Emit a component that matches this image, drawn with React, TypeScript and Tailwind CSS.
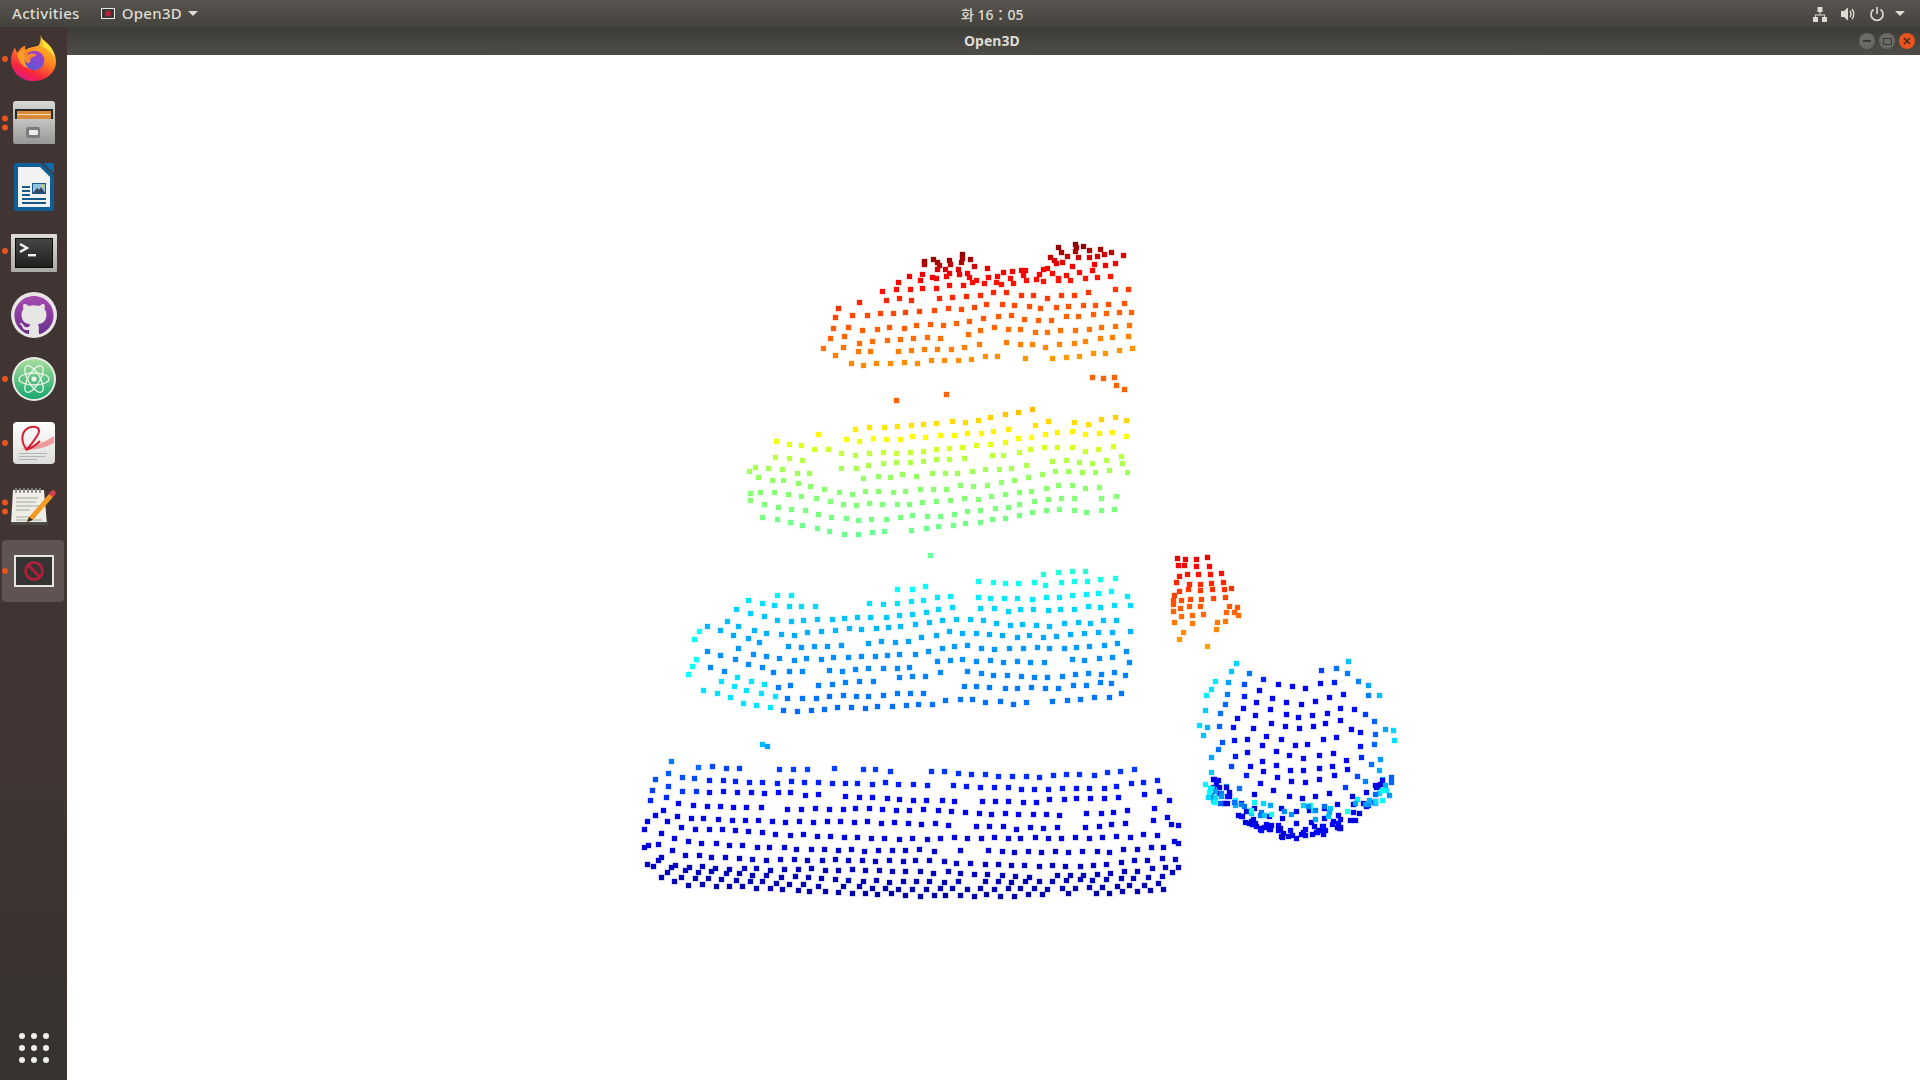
import type { ReactNode } from "react";

type Pt = [number, number];

interface Dot {
  x: number;
  y: number;
  v: number;
}

// seeded so the cloud comes out the same on every load
let seed = 73123;
const rnd = () => {
  seed = (seed + 0x6d2b79f5) | 0;
  let t = Math.imul(seed ^ (seed >>> 15), 1 | seed);
  t = (t + Math.imul(t ^ (t >>> 7), 61 | t)) ^ t;
  return ((t ^ (t >>> 14)) >>> 0) / 4294967296;
};

const lerp = (line: Pt[], a: number) => {
  if (a <= line[0][0]) return line[0][1];
  for (let i = 1; i < line.length; i++) {
    if (a <= line[i][0]) {
      const [x0, y0] = line[i - 1];
      const [x1, y1] = line[i];
      return y0 + ((y1 - y0) * (a - x0)) / (x1 - x0);
    }
  }
  return line[line.length - 1][1];
};

const jet = (v: number) => {
  const c = (n: number) => Math.round(255 * Math.max(0, Math.min(1, 1.5 - Math.abs(4 * v - n))));
  return `rgb(${c(3)},${c(2)},${c(1)})`;
};

// scan lines run along the bottom edge, each one starts at its own offset
function grid(o: {
  top: Pt[];
  bottom: Pt[];
  x0: number;
  x1: number;
  height: number;
  dx?: number;
  dy?: number;
  gaps?: number[];
  jit?: number;
  drop?: (x: number, y: number) => number;
  color: (x: number, y: number) => number;
}) {
  const out: Dot[] = [];
  const dx = o.dx ?? 13.5;
  const dy = o.dy ?? 13;
  const jit = o.jit ?? 2.5;
  let offset = 0;
  let row = 0;
  while (offset <= o.height) {
    const shift = rnd() * dx;
    const wobble = rnd() * 6;
    for (let x = o.x0 + shift; x <= o.x1; x += dx) {
      const y = lerp(o.bottom, x) - offset + Math.sin(x / 55 + wobble) * 1.5;
      const top = lerp(o.top, x);
      if (y < top - 1) continue;
      const px = x + (rnd() - 0.5) * jit;
      const py = y + (rnd() - 0.5) * jit;
      const drop = o.drop ? o.drop(px, py) : y < top + 10 ? 0.16 : 0.05;
      if (rnd() > drop) out.push({ x: px, y: py, v: o.color(px, py) });
    }
    offset += o.gaps && row < o.gaps.length ? o.gaps[row] : dy;
    row++;
  }
  return out;
}

const fromZoom = (pts: Pt[], ox: number, oy: number, v: (x: number, y: number) => number): Dot[] =>
  pts.map(([zx, zy]) => {
    const x = ox + zx / 3;
    const y = oy + zy / 3;
    return { x, y, v: v(x, y) };
  });

const topColor = (x: number, y: number) =>
  lerp(
    [
      [252, 1],
      [262, 0.95],
      [272, 0.89],
      [290, 0.85],
      [310, 0.8],
      [370, 0.72],
    ],
    y + 0.08 * (x - 960),
  );

const crown: Pt[] = [
  [372, 92], [372, 103], [398, 88], [411, 95], [418, 105], [446, 90], [449, 102], [486, 73], [486, 85], [484, 97],
  [510, 86], [523, 108], [561, 115], [410, 118], [435, 116], [473, 117], [773, 51], [782, 65], [825, 43], [829, 52],
  [848, 47], [826, 64], [868, 61], [901, 56], [911, 71], [933, 66], [968, 76], [892, 77], [867, 82], [833, 82],
  [801, 78], [751, 82], [762, 91], [767, 98], [785, 96], [816, 109], [742, 115], [730, 118], [295, 157], [327, 137],
  [360, 150], [366, 132], [397, 140], [409, 143], [437, 139], [448, 130], [478, 133], [500, 128], [508, 142], [517, 156],
  [552, 160], [565, 141], [587, 157], [592, 138], [604, 161], [610, 125], [636, 122], [662, 119], [676, 121], [630, 144],
  [640, 160], [670, 136], [678, 150], [707, 146], [718, 131], [757, 130], [775, 145], [797, 135], [837, 125], [877, 120],
  [882, 103], [915, 106], [946, 100],
];

const handScan: Pt[] = [
  [52, 55], [75, 56], [109, 56], [141, 52], [53, 76], [73, 76], [108, 79], [146, 77], [56, 108], [80, 103], [114, 101],
  [149, 102], [182, 99], [47, 126], [88, 131], [119, 131], [154, 128], [189, 125], [58, 153], [83, 148], [120, 151],
  [157, 146], [191, 146], [212, 143], [43, 166], [62, 179], [90, 178], [124, 178], [160, 175], [195, 172], [39, 180],
  [38, 193], [59, 203], [87, 197], [119, 199], [206, 197], [230, 200], [40, 212], [64, 229], [96, 225], [130, 221],
  [199, 217], [223, 215], [234, 226], [41, 247], [95, 248], [170, 247], [195, 244], [168, 268], [70, 277], [57, 296],
  [141, 317],
];

const cloud: Dot[] = [
  // cabinet top
  ...fromZoom(crown, 800, 230, topColor),
  ...grid({
    top: [[820, 320], [830, 304], [870, 294], [900, 286], [960, 282], [1040, 282], [1060, 272], [1130, 272]],
    bottom: [[820, 347], [853, 366], [890, 364], [915, 362], [963, 359], [993, 353], [1045, 358], [1098, 353], [1135, 350]],
    x0: 820,
    x1: 1135,
    height: 90,
    dy: 12.5,
    color: topColor,
  }),
  ...fromZoom(
    [[877, 441], [908, 444], [943, 442], [947, 466], [973, 476], [438, 492], [289, 510]],
    800,
    230,
    () => 0.78,
  ),
  // shelf two
  ...grid({
    top: [[747, 473], [758, 447], [775, 437], [808, 433], [860, 428], [907, 418], [947, 412], [1010, 410], [1063, 411], [1125, 420]],
    bottom: [[747, 493], [753, 517], [807, 525], [848, 533], [887, 530], [940, 526], [992, 521], [1063, 510], [1088, 514], [1117, 510], [1127, 497]],
    x0: 745,
    x1: 1127,
    height: 120,
    drop: (x, y) => (x > 815 && x < 862 && y > 458 && y < 483 ? 0.9 : 0.05),
    color: (_x, y) =>
      lerp(
        [
          [410, 0.69],
          [435, 0.63],
          [455, 0.56],
          [480, 0.52],
          [535, 0.48],
        ],
        y,
      ),
  }),
  { x: 930, y: 555, v: 0.48 },
  // shelf three
  ...grid({
    top: [[680, 660], [703, 622], [733, 613], [743, 597], [765, 592], [807, 597], [827, 617], [857, 612], [873, 595], [923, 585], [953, 590], [993, 578], [1077, 570], [1107, 573], [1133, 595]],
    bottom: [[680, 662], [702, 690], [753, 706], [778, 712], [845, 708], [925, 703], [947, 697], [1007, 702], [1048, 702], [1120, 696], [1131, 683]],
    x0: 680,
    x1: 1131,
    height: 135,
    drop: (x, y) => {
      if (x < 730) return 0.3;
      if (x > 940 && x < 965 && y > 660 && y < 685) return 0.6;
      return 0.04;
    },
    color: (x, y) => {
      if (x < 775 && y > 675) return 0.35;
      if (x < 700) return 0.38;
      return lerp(
        [
          [570, 0.42],
          [590, 0.37],
          [610, 0.33],
          [650, 0.27],
          [712, 0.23],
        ],
        y,
      );
    },
  }),
  { x: 762, y: 744, v: 0.31 },
  { x: 767, y: 746, v: 0.28 },
  // shelf four
  ...grid({
    top: [[636, 848], [638, 823], [643, 800], [658, 773], [670, 763], [700, 760], [760, 767], [829, 763], [909, 773], [952, 768], [1025, 766], [1067, 764], [1156, 764], [1161, 775], [1180, 813]],
    bottom: [[636, 848], [652, 872], [678, 885], [770, 889], [860, 892], [950, 894], [1020, 896], [1100, 894], [1165, 888], [1181, 860]],
    x0: 634,
    x1: 1181,
    height: 136,
    dx: 13.6,
    gaps: [6, 7, 8, 10, 12],
    jit: 2,
    color: (x, y) =>
      lerp(
        [
          [760, 0.21],
          [775, 0.17],
          [800, 0.12],
          [840, 0.09],
          [870, 0.06],
          [896, 0.04],
        ],
        y,
      ) + (x < 700 && y < 800 ? 0.04 : 0),
  }),
  // loose scan on the chair
  ...fromZoom(handScan, 1160, 540, (_x, y) =>
    lerp(
      [
        [555, 0.9],
        [590, 0.82],
        [640, 0.72],
      ],
      y,
    ),
  ),
  // bowl
  ...grid({
    top: [[1198, 707], [1205, 680], [1227, 662], [1260, 663], [1285, 680], [1310, 678], [1333, 653], [1350, 660], [1375, 680], [1397, 735]],
    bottom: [[1198, 707], [1203, 775], [1240, 815], [1270, 830], [1298, 838], [1340, 830], [1375, 800], [1397, 735]],
    x0: 1197,
    x1: 1398,
    height: 180,
    dx: 14,
    dy: 13.5,
    color: (x, y) => {
      const t = Math.hypot((x - 1297) / 100, (y - 735) / 95);
      if (y > 790) return 0.1;
      return 0.115 + Math.max(0, t - 0.6) * 0.6;
    },
  }),
  // dark lip along the bottom of the bowl
  ...Array.from({ length: 70 }, () => {
    const a = Math.PI * (0.08 + rnd() * 0.84);
    const r = 0.86 + rnd() * 0.14;
    return {
      x: 1298 + Math.cos(a) * 92 * r,
      y: 758 + Math.sin(a) * 80 * r,
      v: 0.07 + rnd() * 0.07,
    };
  }),
  // light band above it, thin and broken
  ...Array.from({ length: 56 }, () => {
    const a = Math.PI * (0.02 + rnd() * 0.96);
    const x = 1298 + Math.cos(a) * 95 + (rnd() - 0.5) * 6;
    const y = 782 + Math.sin(a) * 30 + (rnd() - 0.5) * 16;
    return { x, y, v: 0.22 + rnd() * 0.2 };
  }),
];

function PointCloud() {
  return (
    <svg viewBox="67 55 1853 1025" className="block h-full w-full">
      {cloud.map((d, i) => {
        const fill = jet(d.v);
        return (
          <rect
            key={i}
            x={Math.round(d.x) - 2}
            y={Math.round(d.y) - 2}
            width={5}
            height={5}
            fill={fill}
            stroke={fill}
            strokeWidth={1}
            strokeOpacity={0.3}
          />
        );
      })}
    </svg>
  );
}

function Firefox() {
  return (
    <svg viewBox="0 0 48 48" className="mb-[3px] h-[47px] w-[47px]">
      <defs>
        <linearGradient id="fxBase" x1="0.8" y1="0" x2="0.3" y2="1">
          <stop offset="0" stopColor="#ffd52e" />
          <stop offset="0.45" stopColor="#ff8a1f" />
          <stop offset="0.8" stopColor="#f5263f" />
          <stop offset="1" stopColor="#e3168a" />
        </linearGradient>
        <linearGradient id="fxBall" x1="0.7" y1="0" x2="0.3" y2="1">
          <stop offset="0" stopColor="#a63bc4" />
          <stop offset="1" stopColor="#5a5bd8" />
        </linearGradient>
      </defs>
      <path
        d="M31 1c1 5 7 7 11 13 3 5 5 9 5 14 0 12-11 20-23 20S1 39 1 27c0-5 2-10 4-13 1 3 2 4 3 5 1-3 4-6 8-7-1 2-1 3 0 4 3-2 9-3 13-4 2-3 3-7 2-11z"
        fill="url(#fxBase)"
      />
      <path d="M31 1c1 5 7 7 11 13 2 3 4 7 4 11-3-6-8-10-13-12 1-4 0-9-2-12z" fill="#ffe23c" />
      <path d="M8 19c2-2 6-3 10-2-3 1-4 3-4 5 3-2 7-2 9 0l-6 5c1 4 5 7 10 6-4 3-11 3-15-2-3-3-5-8-4-12z" fill="#ff9d2a" />
      <circle cx="25" cy="27" r="10" fill="url(#fxBall)" />
      <path d="M15 23c3-3 9-4 12-2-1 2-4 2-6 4 0 3-1 5-3 5-3-2-4-5-3-7z" fill="#f9872c" />
    </svg>
  );
}

function Cabinet() {
  return (
    <svg viewBox="0 0 44 44" className="h-[44px] w-[44px]">
      <defs>
        <linearGradient id="cabTop" x1="0" y1="0" x2="0" y2="1">
          <stop offset="0" stopColor="#d8d8d6" />
          <stop offset="1" stopColor="#8a8a87" />
        </linearGradient>
        <linearGradient id="cabFront" x1="0" y1="0" x2="0" y2="1">
          <stop offset="0" stopColor="#c4c4c2" />
          <stop offset="1" stopColor="#989896" />
        </linearGradient>
      </defs>
      <rect x="1" y="0" width="42" height="43" rx="3" fill="url(#cabTop)" />
      <rect x="3" y="8" width="38" height="14" fill="#2c2a28" />
      <rect x="5" y="10" width="34" height="11" fill="#d98b3a" />
      <rect x="5" y="13" width="34" height="1" fill="#f6dfb8" />
      <rect x="2" y="18" width="41" height="25" rx="1" fill="url(#cabFront)" />
      <rect x="14" y="26" width="14" height="11" rx="2" fill="#7b7b79" />
      <rect x="17" y="29" width="9" height="5" rx="1" fill="#ecece9" />
    </svg>
  );
}

function Writer() {
  return (
    <svg viewBox="0 0 40 48" className="h-[48px] w-[40px]">
      <path d="M2 0h25l13 13v33a2 2 0 0 1-2 2H2a2 2 0 0 1-2-2V2a2 2 0 0 1 2-2z" fill="#0f5e96" />
      <path d="M29 0h9a2 2 0 0 1 2 2v9z" fill="#0f6aa8" />
      <path d="M4 4h22l10 10v30H4z" fill="#f2f2f0" />
      <rect x="8" y="23" width="8" height="2" fill="#155a8a" />
      <rect x="8" y="27" width="8" height="2" fill="#155a8a" />
      <rect x="8" y="31" width="8" height="2" fill="#155a8a" />
      <rect x="8" y="35" width="24" height="2" fill="#155a8a" />
      <rect x="8" y="39" width="24" height="2" fill="#155a8a" />
      <rect x="18" y="20" width="14" height="11" fill="#155a8a" />
      <rect x="19" y="21" width="12" height="9" fill="#8fc2de" />
      <path d="M19 30l4-5 2 2 2-3 4 6z" fill="#33465a" />
      <circle cx="28.500" cy="23" r="1.600" fill="#e6c84a" />
    </svg>
  );
}

function TerminalIcon() {
  return (
    <svg viewBox="0 0 46 38" className="mt-[4px] h-[38px] w-[46px]">
      <defs>
        <linearGradient id="termFrame" x1="0" y1="0" x2="0" y2="1">
          <stop offset="0" stopColor="#dcdcd9" />
          <stop offset="1" stopColor="#a8a8a5" />
        </linearGradient>
        <linearGradient id="termBg" x1="0" y1="0" x2="0" y2="1">
          <stop offset="0" stopColor="#454543" />
          <stop offset="1" stopColor="#1f1f1e" />
        </linearGradient>
      </defs>
      <rect x="0" y="0" width="46" height="38" rx="1" fill="url(#termFrame)" />
      <rect x="4" y="4" width="38" height="30" fill="#0c0c0b" />
      <rect x="5" y="5" width="36" height="28" fill="url(#termBg)" />
      <path d="M9 10l7 4-7 4" fill="none" stroke="#f2f2f0" strokeWidth="2.400" />
      <rect x="17" y="20" width="8" height="2.400" fill="#f2f2f0" />
    </svg>
  );
}

function Github() {
  return (
    <svg viewBox="0 0 46 46" className="h-[46px] w-[46px]">
      <defs>
        <linearGradient id="ghBg" x1="0" y1="0" x2="0" y2="1">
          <stop offset="0" stopColor="#a64bb0" />
          <stop offset="1" stopColor="#6b2f8f" />
        </linearGradient>
      </defs>
      <circle cx="23" cy="23" r="23" fill="#e8e6e4" />
      <g transform="translate(3.400 3.400) scale(1.633)">
        <path
          d="M12 .297c-6.63 0-12 5.373-12 12 0 5.303 3.438 9.8 8.205 11.385.6.113.82-.258.82-.577 0-.285-.01-1.04-.015-2.04-3.338.724-4.042-1.61-4.042-1.61C4.422 18.07 3.633 17.7 3.633 17.7c-1.087-.744.084-.729.084-.729 1.205.084 1.838 1.236 1.838 1.236 1.07 1.835 2.809 1.305 3.495.998.108-.776.417-1.305.76-1.605-2.665-.3-5.466-1.332-5.466-5.93 0-1.31.465-2.38 1.235-3.22-.135-.303-.54-1.523.105-3.176 0 0 1.005-.322 3.3 1.23.96-.267 1.98-.399 3-.405 1.02.006 2.04.138 3 .405 2.28-1.552 3.285-1.23 3.285-1.23.645 1.653.24 2.873.12 3.176.765.84 1.23 1.91 1.23 3.22 0 4.61-2.805 5.625-5.475 5.92.42.36.81 1.096.81 2.22 0 1.606-.015 2.896-.015 3.286 0 .315.21.69.825.57C20.565 22.092 24 17.592 24 12.297c0-6.627-5.373-12-12-12"
          fill="url(#ghBg)"
        />
      </g>
    </svg>
  );
}

function AtomIcon() {
  return (
    <svg viewBox="0 0 44 44" className="h-[44px] w-[44px]">
      <defs>
        <linearGradient id="atomBg" x1="0" y1="0" x2="0" y2="1">
          <stop offset="0" stopColor="#a8dd9c" />
          <stop offset="1" stopColor="#18a86e" />
        </linearGradient>
      </defs>
      <circle cx="22" cy="22" r="22" fill="#ecece6" />
      <circle cx="22" cy="22" r="20" fill="url(#atomBg)" />
      <g fill="none" stroke="#f0f6ea" strokeWidth="1.300">
        <ellipse cx="22" cy="22" rx="15" ry="6" />
        <ellipse cx="22" cy="22" rx="15" ry="6" transform="rotate(60 22 22)" />
        <ellipse cx="22" cy="22" rx="15" ry="6" transform="rotate(120 22 22)" />
      </g>
      <circle cx="22" cy="22" r="2.500" fill="#f0f6ea" />
    </svg>
  );
}

function Acrobat() {
  return (
    <svg viewBox="0 0 42 42" className="h-[42px] w-[42px]">
      <defs>
        <linearGradient id="acroBg" x1="0" y1="0" x2="0" y2="1">
          <stop offset="0" stopColor="#ffffff" />
          <stop offset="1" stopColor="#dcdcda" />
        </linearGradient>
      </defs>
      <rect x="0" y="0" width="42" height="42" rx="4" fill="url(#acroBg)" />
      <path d="M8 27c10-2 23-6 33-13v7c-9 5-20 7-29 7z" fill="#ef9a9a" />
      <path
        d="M14 28C6 18 9 7 18 5c8-1 10 3 6 9-3 5-7 10-11 14 6-2 10-5 14-9"
        fill="none"
        stroke="#cf1f2e"
        strokeWidth="2"
      />
      <rect x="6" y="31" width="28" height="1" fill="#b4b4b2" />
      <rect x="6" y="34" width="26" height="1" fill="#b4b4b2" />
      <rect x="6" y="37" width="18" height="1" fill="#b4b4b2" />
    </svg>
  );
}

function Notepad() {
  return (
    <svg viewBox="0 0 46 38" className="h-[38px] w-[46px]">
      <path d="M2 2h31l3 34H0z" fill="#eeeee6" />
      <rect x="0" y="34" width="37" height="3" fill="#4b4a46" />
      <g stroke="#a6a6a0" strokeWidth="1">
        <path d="M5 10h22M5 14h20M5 18h24M5 22h14M5 29h20M5 32h26" />
      </g>
      <g fill="#8a8a84">
        <rect x="4" y="0" width="2" height="5" rx="1" />
        <rect x="8" y="0" width="2" height="5" rx="1" />
        <rect x="12" y="0" width="2" height="5" rx="1" />
        <rect x="16" y="0" width="2" height="5" rx="1" />
        <rect x="20" y="0" width="2" height="5" rx="1" />
        <rect x="24" y="0" width="2" height="5" rx="1" />
        <rect x="28" y="0" width="2" height="5" rx="1" />
      </g>
      <path d="M18 29l20-23 4 3-20 23-6 2z" fill="#f39a26" />
      <path d="M38 6l2-3c1-1 3-1 4 0s1 3 0 4l-2 2z" fill="#d8414c" />
      <path d="M18 29l-2 5 6-2z" fill="#2e2a26" />
    </svg>
  );
}

function NoEntry() {
  return (
    <svg viewBox="0 0 40 32" className="h-[32px] w-[40px]">
      <rect width="40" height="32" fill="#e4e4e2" />
      <rect x="2" y="2" width="36" height="28" fill="#353432" />
      <circle cx="20" cy="16" r="8.500" fill="none" stroke="#b51f3c" strokeWidth="2.600" />
      <path d="M14 10l12 12" stroke="#b51f3c" strokeWidth="2.600" />
    </svg>
  );
}

function Pips({ count }: { count: number }) {
  return (
    <div className="absolute left-[2px] top-1/2 flex -translate-y-1/2 flex-col gap-[3px]">
      {Array.from({ length: count }, (_, i) => (
        <span key={i} className="block h-[6px] w-[6px] rounded-full bg-[#e9541f]" />
      ))}
    </div>
  );
}

function DockItem({ pips = 0, active = false, children }: { pips?: number; active?: boolean; children: ReactNode }) {
  return (
    <div className="relative flex h-[64px] w-[67px] items-center justify-center">
      {active && <div className="absolute bottom-[1px] left-[2px] right-[3px] top-[1px] rounded-[4px] bg-[#5f5451]" />}
      <div className="relative flex items-center justify-center">{children}</div>
      {pips > 0 && <Pips count={pips} />}
    </div>
  );
}

function Dock() {
  return (
    <aside className="flex w-[67px] shrink-0 flex-col bg-[linear-gradient(180deg,#403533_0%,#403533_70%,#3a3330_88%,#363330_100%)]">
      <DockItem pips={1}>
        <Firefox />
      </DockItem>
      <DockItem pips={2}>
        <Cabinet />
      </DockItem>
      <DockItem>
        <Writer />
      </DockItem>
      <DockItem pips={1}>
        <TerminalIcon />
      </DockItem>
      <DockItem>
        <Github />
      </DockItem>
      <DockItem pips={1}>
        <AtomIcon />
      </DockItem>
      <DockItem pips={1}>
        <Acrobat />
      </DockItem>
      <DockItem pips={2}>
        <Notepad />
      </DockItem>
      <DockItem pips={1} active>
        <NoEntry />
      </DockItem>
      <div className="mb-[17px] mt-auto grid w-[30px] grid-cols-3 gap-[6px] self-center">
        {Array.from({ length: 9 }, (_, i) => (
          <span key={i} className="block h-[6px] w-[6px] rounded-full bg-[#eeeeec]" />
        ))}
      </div>
    </aside>
  );
}

function TopBar() {
  return (
    <header className="relative flex h-[27px] shrink-0 items-center bg-[linear-gradient(180deg,#57544e_0%,#45433e_100%)] text-[15px] font-medium tracking-[0.3px] text-[#dfdbd2]">
      <span className="ml-[12px]">Activities</span>
      <svg viewBox="0 0 14 11" className="ml-[21px] h-[11px] w-[14px]">
        <rect width="14" height="11" fill="#e8e8e6" />
        <rect x="1" y="1" width="12" height="9" fill="#3a3836" />
        <circle cx="7" cy="5.500" r="3" fill="#b51f3c" />
      </svg>
      <span className="ml-[7px]">Open3D</span>
      <svg viewBox="0 0 10 5" className="ml-[6px] h-[5px] w-[10px]">
        <path d="M0 0h10L5 5z" fill="#dfdbd2" />
      </svg>
      <span className="absolute left-[961px] top-[4px] text-[14px] tracking-normal">화 16：05</span>
      <div className="ml-auto mr-[15px] flex items-center">
        <svg viewBox="0 0 16 16" className="h-[16px] w-[16px]" fill="#dfdbd2">
          <rect x="5.500" y="1" width="5" height="5" />
          <rect x="1" y="11" width="5" height="5" />
          <rect x="10" y="11" width="5" height="5" />
          <path d="M7.500 6h1v2.500H13V11h-1V9.500H4V11H3V8.500h4.500z" />
        </svg>
        <svg viewBox="0 0 16 16" className="ml-[12px] h-[16px] w-[16px]" fill="#dfdbd2">
          <path d="M1 5h3l4-3.500v13L4 11H1z" />
          <path d="M10 5c1.200 1.500 1.200 4.500 0 6M12 3c2.300 2.500 2.300 7.500 0 10" fill="none" stroke="#dfdbd2" strokeWidth="1.400" />
        </svg>
        <svg viewBox="0 0 16 16" className="ml-[13px] h-[16px] w-[16px]" fill="none" stroke="#dfdbd2" strokeWidth="1.600">
          <path d="M4.500 3.500a6 6 0 1 0 7 0M8 1v7" />
        </svg>
        <svg viewBox="0 0 10 5" className="ml-[10px] h-[5px] w-[10px]">
          <path d="M0 0h10L5 5z" fill="#dfdbd2" />
        </svg>
      </div>
    </header>
  );
}

function TitleBar() {
  return (
    <div className="relative flex h-[28px] shrink-0 items-center bg-[linear-gradient(180deg,#3d3b37_0%,#4f4d48_100%)]">
      <span className="absolute left-[897px] top-[3px] text-[14px] font-bold text-[#dfdbd2]">Open3D</span>
      <div className="ml-auto mr-[5px] flex items-center gap-[4px]">
        <div className="flex h-[16px] w-[16px] items-center justify-center rounded-full bg-[#6a6964]">
          <span className="block h-[2px] w-[8px] bg-[#3c3b37]" />
        </div>
        <div className="flex h-[16px] w-[16px] items-center justify-center rounded-full bg-[#6a6964]">
          <span className="block h-[7px] w-[9px] border border-[#3c3b37]" />
        </div>
        <div className="flex h-[16px] w-[16px] items-center justify-center rounded-full bg-[#e9541f]">
          <svg viewBox="0 0 8 8" className="h-[8px] w-[8px]">
            <path d="M1 1l6 6M7 1L1 7" stroke="#3c2a20" strokeWidth="1.500" />
          </svg>
        </div>
      </div>
    </div>
  );
}

export default function App() {
  return (
    <div className="flex h-screen w-screen flex-col overflow-hidden bg-white font-['Noto_Sans','Noto_Sans_CJK_KR',sans-serif]">
      <TopBar />
      <div className="flex min-h-0 flex-1">
        <Dock />
        <main className="flex min-w-0 flex-1 flex-col">
          <TitleBar />
          <div className="min-h-0 flex-1 bg-white">
            <PointCloud />
          </div>
        </main>
      </div>
    </div>
  );
}
